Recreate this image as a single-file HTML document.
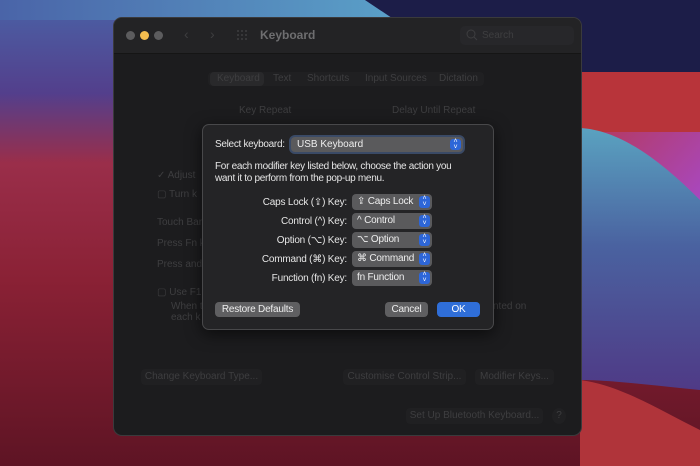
<!DOCTYPE html>
<html><head><style>
*{margin:0;padding:0;box-sizing:border-box}
body{width:700px;height:466px;overflow:hidden;position:relative;font-family:"Liberation Sans",sans-serif;background:#6a1a2a}
.abs{position:absolute}
.dim{color:#3e3e40;font-size:10px;position:absolute}
.lbl{position:absolute;width:140px;text-align:right;color:#e6e6e6;font-size:10px;letter-spacing:-0.2px}
.pop{position:absolute;left:352px;width:80px;height:16px;background:#5a5a5c;border-radius:4px;color:#eee;font-size:10px;line-height:16px;padding-left:5px;letter-spacing:-0.2px}
.pop b,.sel b{position:absolute;right:2px;top:2px;width:11px;height:12px;background:#2d66d8;border-radius:3px;font-weight:normal;color:#fff;font-size:7px;line-height:6px;text-align:center}
.btn{position:absolute;height:15px;border-radius:4px;background:#5f5f61;color:#eee;font-size:10px;line-height:15px;text-align:center;letter-spacing:-0.2px}
.gb{position:absolute;height:16px;border-radius:4px;background:#202022;color:#3e3e40;font-size:10px;line-height:16px;text-align:center}
</style></head><body>
<svg class="abs" style="left:0;top:0" width="700" height="466">
<defs>
<linearGradient id="L" x1="0" y1="0" x2="0" y2="1"><stop offset="0" stop-color="#4a62a6"/><stop offset=".2" stop-color="#533f8c"/><stop offset=".35" stop-color="#9a2e4a"/><stop offset=".6" stop-color="#8a2135"/><stop offset="1" stop-color="#5e1424"/></linearGradient>
<linearGradient id="T" x1="0" y1="0" x2="1" y2="0"><stop offset="0" stop-color="#4a64a8"/><stop offset="1" stop-color="#5aa0c8"/></linearGradient>
<linearGradient id="R" x1="0" y1="0" x2="0" y2="1"><stop offset="0" stop-color="#5aa2c0"/><stop offset=".45" stop-color="#4a62a0"/><stop offset="1" stop-color="#4f3a86"/></linearGradient>
<linearGradient id="P" x1="0" y1="0" x2="1" y2="1"><stop offset="0" stop-color="#b8343a"/><stop offset="1" stop-color="#a848c0"/></linearGradient>
</defs>
<rect width="700" height="466" fill="url(#L)"/>
<polygon points="0,0 365,0 395,20 0,20" fill="url(#T)"/>
<polygon points="365,0 700,0 700,72 395,72 395,20" fill="#1c1d48"/>
<rect x="580" y="72" width="120" height="130" fill="url(#P)"/>
<rect x="580" y="72" width="120" height="60" fill="#b8343a"/>
<path d="M580,128 C620,130 660,160 700,200 L700,390 C650,385 610,380 580,380 Z" fill="url(#R)"/>
<path d="M580,380 C620,385 660,410 700,430 L700,466 L580,466Z" fill="#b0343a"/>
</svg>
<div class="abs" style="left:113px;top:17px;width:469px;height:419px;background:#1c1c1e;border-radius:9px;border:1px solid #3a3a3c;overflow:hidden">
 <div class="abs" style="left:0;top:0;width:469px;height:36px;background:#232325;border-bottom:1px solid #151515"></div>
</div>
<div class="abs" style="left:126px;top:31px;width:9px;height:9px;border-radius:50%;background:#5c5c5e"></div>
<div class="abs" style="left:140px;top:31px;width:9px;height:9px;border-radius:50%;background:#f4bd4f"></div>
<div class="abs" style="left:154px;top:31px;width:9px;height:9px;border-radius:50%;background:#5c5c5e"></div>
<div class="abs" style="left:184px;top:26px;color:#3e3e40;font-size:14px">&#8249;</div>
<div class="abs" style="left:210px;top:26px;color:#3e3e40;font-size:14px">&#8250;</div>
<svg class="abs" style="left:236px;top:29px" width="13" height="13"><g fill="#3e3e40"><circle cx="2" cy="2" r="1"/><circle cx="6" cy="2" r="1"/><circle cx="10" cy="2" r="1"/><circle cx="2" cy="6" r="1"/><circle cx="6" cy="6" r="1"/><circle cx="10" cy="6" r="1"/><circle cx="2" cy="10" r="1"/><circle cx="6" cy="10" r="1"/><circle cx="10" cy="10" r="1"/></g></svg>
<div class="abs" style="left:260px;top:28px;color:#6e6e70;font-size:12px;font-weight:bold">Keyboard</div>
<div class="abs" style="left:460px;top:26px;width:114px;height:19px;border-radius:5px;background:#27272a"></div>
<svg class="abs" style="left:466px;top:29px" width="12" height="12"><circle cx="5" cy="5" r="4" stroke="#3e3e40" fill="none"/><line x1="8" y1="8" x2="11" y2="11" stroke="#3e3e40"/></svg>
<div class="abs" style="left:482px;top:30px;color:#3e3e40;font-size:10px">Search</div>
<div class="abs" style="left:208px;top:72px;width:276px;height:14px;border-radius:4px;background:#202022"></div>
<div class="abs" style="left:210px;top:72px;width:54px;height:14px;border-radius:4px;background:#29292b"></div>
<div class="dim" style="left:217px;top:73px">Keyboard</div>
<div class="dim" style="left:273px;top:73px">Text</div>
<div class="dim" style="left:307px;top:73px">Shortcuts</div>
<div class="dim" style="left:365px;top:73px">Input Sources</div>
<div class="dim" style="left:439px;top:73px">Dictation</div>
<div class="dim" style="left:239px;top:105px">Key Repeat</div>
<div class="dim" style="left:392px;top:105px">Delay Until Repeat</div>
<div class="dim" style="left:157px;top:170px">&#10003; Adjust</div>
<div class="dim" style="left:157px;top:189px">&#9634; Turn k</div>
<div class="dim" style="left:157px;top:217px">Touch Bar</div>
<div class="dim" style="left:157px;top:238px">Press Fn k</div>
<div class="dim" style="left:157px;top:259px">Press and</div>
<div class="dim" style="left:157px;top:287px">&#9634; Use F1</div>
<div class="dim" style="left:171px;top:301px">When t</div>
<div class="dim" style="left:171px;top:312px">each k</div>
<div class="dim" style="left:493px;top:301px">nted on</div>
<div class="gb" style="left:141px;top:369px;width:121px">Change Keyboard Type...</div>
<div class="gb" style="left:343px;top:369px;width:123px">Customise Control Strip...</div>
<div class="gb" style="left:475px;top:369px;width:79px">Modifier Keys...</div>
<div class="gb" style="left:406px;top:408px;width:137px">Set Up Bluetooth Keyboard...</div>
<div class="gb" style="left:552px;top:408px;width:14px;border-radius:50%">?</div>

<div class="abs" style="left:202px;top:124px;width:292px;height:206px;background:#242426;border:1px solid #48484a;border-radius:7px;box-shadow:0 4px 16px rgba(0,0,0,.6)"></div>
<div class="abs" style="left:215px;top:139px;color:#e6e6e6;font-size:10px;letter-spacing:-0.3px">Select keyboard:</div>
<div class="sel abs" style="left:291px;top:137px;width:172px;height:15px;background:#5a5a5c;border-radius:4px;box-shadow:0 0 0 2px #3a4a66;color:#eee;font-size:10px;line-height:15px;padding-left:6px">USB Keyboard<b style="top:2px;height:11px">&#708;<br>&#709;</b></div>
<div class="abs" style="left:215px;top:161px;color:#e6e6e6;font-size:10px;line-height:12px;width:252px;letter-spacing:-0.3px">For each modifier key listed below, choose the action you want it to perform from the pop-up menu.</div>
<div class="lbl" style="top:197px;left:207px">Caps Lock (&#8682;) Key:</div>
<div class="lbl" style="top:216px;left:207px">Control (^) Key:</div>
<div class="lbl" style="top:235px;left:207px">Option (&#8997;) Key:</div>
<div class="lbl" style="top:254px;left:207px">Command (&#8984;) Key:</div>
<div class="lbl" style="top:273px;left:207px">Function (fn) Key:</div>
<div class="pop" style="top:194px">&#8682; Caps Lock<b>&#708;<br>&#709;</b></div>
<div class="pop" style="top:213px">^ Control<b>&#708;<br>&#709;</b></div>
<div class="pop" style="top:232px">&#8997; Option<b>&#708;<br>&#709;</b></div>
<div class="pop" style="top:251px">&#8984; Command<b>&#708;<br>&#709;</b></div>
<div class="pop" style="top:270px">fn Function<b>&#708;<br>&#709;</b></div>
<div class="btn" style="left:215px;top:302px;width:85px">Restore Defaults</div>
<div class="btn" style="left:385px;top:302px;width:43px">Cancel</div>
<div class="btn" style="left:437px;top:302px;width:43px;background:#2f6ed8;color:#fff">OK</div>
</body></html>
